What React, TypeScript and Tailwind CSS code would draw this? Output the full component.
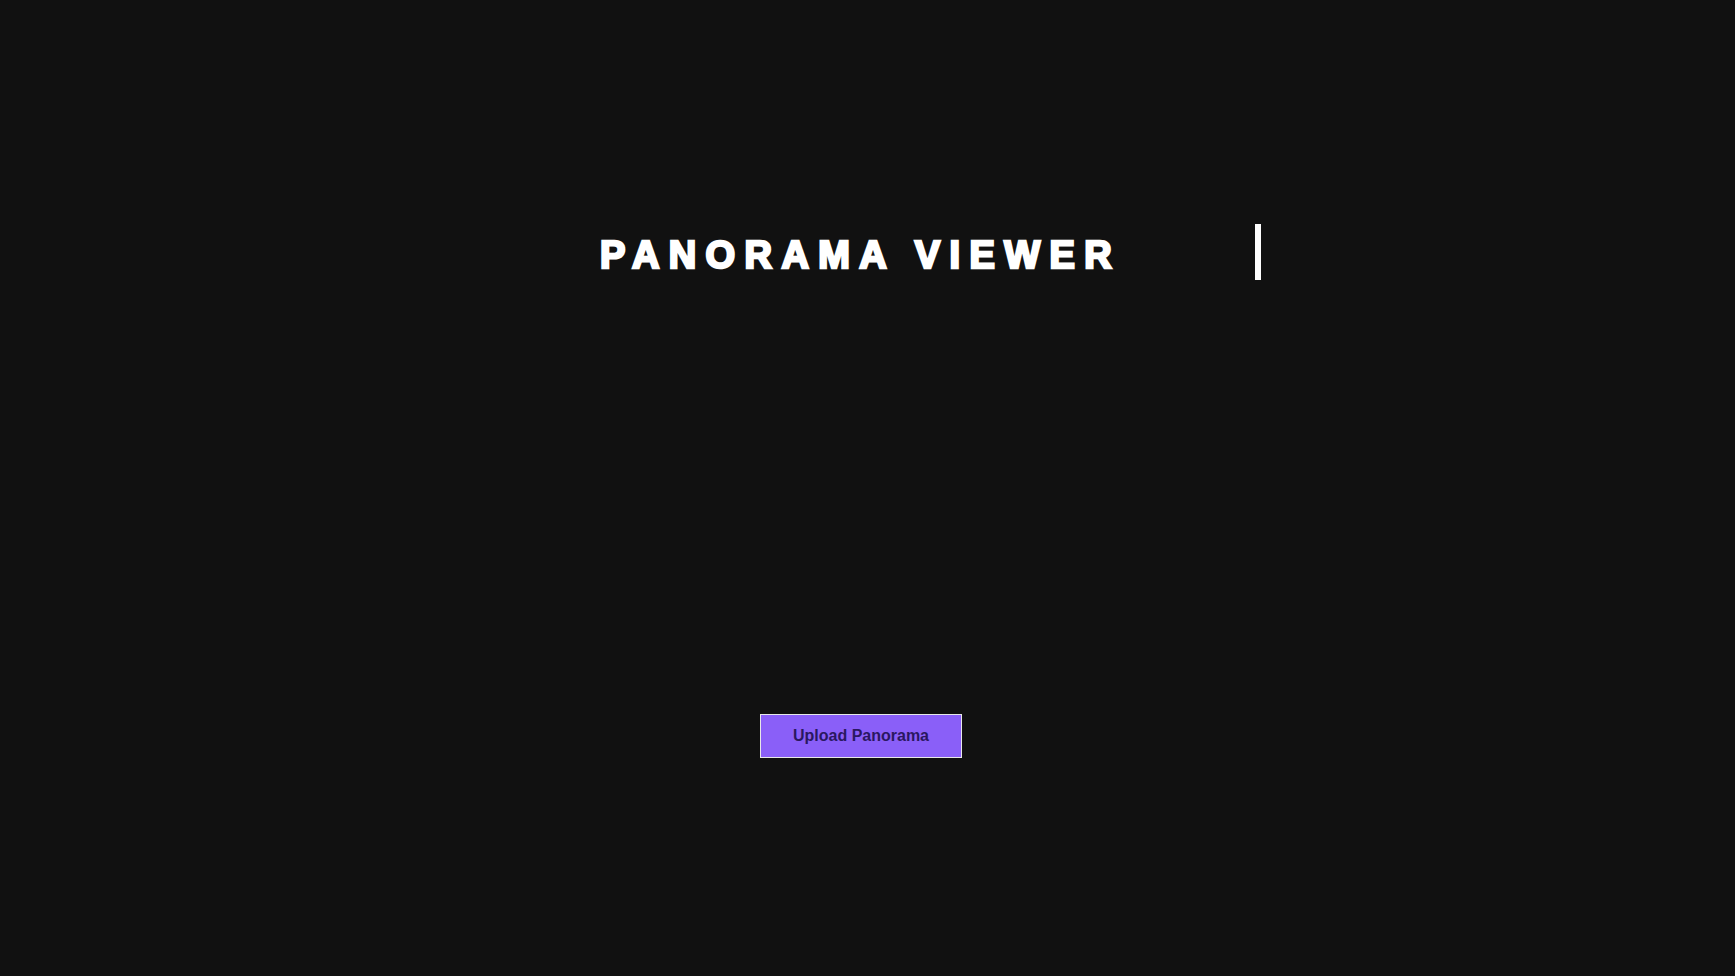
import React from "react";

export default function App() {
  return (
    <div
      className="min-h-screen w-full bg-[#111111] flex flex-col"
      style={{ fontFamily: '"Liberation Sans", Arial, sans-serif' }}
    >
      <div className="pt-[224px] pl-[600px] flex">
        <h1 className="w-[661px] h-[56px] pt-[12px] border-r-[6px] border-white text-white font-bold text-[38px] leading-[38px] tracking-[9.4px] whitespace-nowrap overflow-hidden [-webkit-text-stroke:2.5px_white]">
          PANORAMA VIEWER
        </h1>
      </div>
      <div className="mt-[434px] pl-[760px] flex">
        <button className="w-[202px] h-[44px] border border-[#e8e8e8] bg-[#8a5ff8] text-[#2a1760] font-bold text-[16px] leading-6">
          Upload Panorama
        </button>
      </div>
    </div>
  );
}
